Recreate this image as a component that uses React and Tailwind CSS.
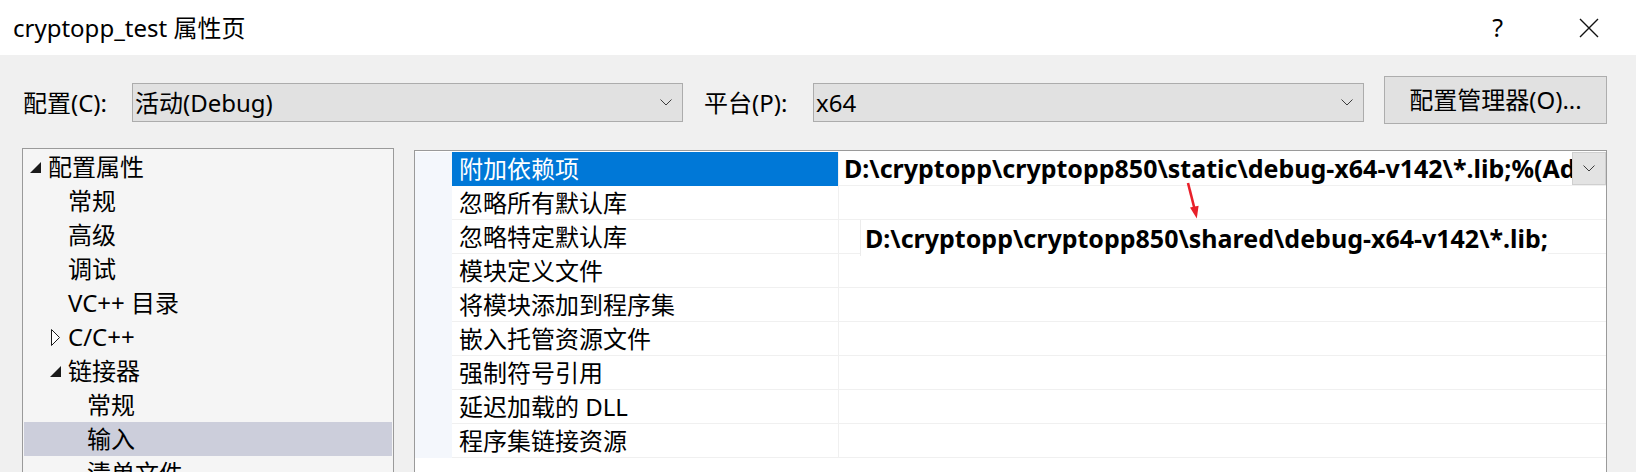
import React from 'react'

const treeItems = [
  { label: '配置属性', pad: 25, arrow: 'open' },
  { label: '常规', pad: 45 },
  { label: '高级', pad: 45 },
  { label: '调试', pad: 45 },
  { label: 'VC++ 目录', pad: 45 },
  { label: 'C/C++', pad: 45, arrow: 'closed' },
  { label: '链接器', pad: 45, arrow: 'open' },
  { label: '常规', pad: 64 },
  { label: '输入', pad: 64, selected: true },
  { label: '清单文件', pad: 64 },
]

const gridRows = [
  '附加依赖项',
  '忽略所有默认库',
  '忽略特定默认库',
  '模块定义文件',
  '将模块添加到程序集',
  '嵌入托管资源文件',
  '强制符号引用',
  '延迟加载的 DLL',
  '程序集链接资源',
]

const Chevron = () => (
  <svg width="12" height="7" viewBox="0 0 12 7" className="shrink-0">
    <path d="M0.5 0.5 L6 6 L11.5 0.5" fill="none" stroke="#3c3c3c" strokeWidth="1" />
  </svg>
)

const TreeArrow = ({ type }) => {
  if (type === 'open') {
    return (
      <svg width="11" height="11" viewBox="0 0 11 11">
        <polygon points="11,0 11,11 0,11" fill="#1a1a1a" />
      </svg>
    )
  }
  return (
    <svg width="10" height="17" viewBox="0 0 10 17">
      <polygon points="0.5,0.5 8.5,8.5 0.5,16.5" fill="#ffffff" stroke="#1a1a1a" strokeWidth="1" />
    </svg>
  )
}

const Combo = ({ value }) => (
  <div className="mt-[5px] w-[551px] h-[39px] border border-[#acacac] bg-[#e1e1e1] flex items-center pl-[2px] pr-[10px]">
    <span className="flex-1 text-[24px] leading-none text-black">{value}</span>
    <Chevron />
  </div>
)

export default function App() {
  return (
    <div className="relative w-[1636px] h-[472px] overflow-hidden bg-[#f0f0f0] font-['Noto_Sans','Noto_Sans_CJK_SC',sans-serif] text-black">
      {/* title bar */}
      <div className="h-[55px] bg-white flex items-center pl-[13px]">
        <span className="flex-1 text-[24px] leading-none">cryptopp_test 属性页</span>
        <span className="text-[25px] leading-none mr-[76px]">?</span>
        <svg width="20" height="20" viewBox="0 0 20 20" className="mr-[37px]">
          <path d="M1 1 L19 19 M19 1 L1 19" stroke="#111" strokeWidth="1.4" />
        </svg>
      </div>

      {/* config row */}
      <div className="mt-[21px] h-[48px] flex items-center">
        <div className="ml-[23px] w-[109px] mt-[5px] text-[24px] leading-none">配置(C):</div>
        <Combo value="活动(Debug)" />
        <div className="ml-[21px] w-[109px] mt-[5px] text-[24px] leading-none">平台(P):</div>
        <Combo value="x64" />
        <button className="ml-[20px] w-[223px] h-[48px] border border-[#adadad] bg-[#e1e1e1] text-[24px] leading-none text-black">
          配置管理器(O)...
        </button>
      </div>

      {/* panels */}
      <div className="mt-[24px] flex items-start">
        <div className="ml-[22px] w-[372px] h-[400px] border border-[#9a9a9a] bg-[#f5f5f5] pt-[1px]">
          {treeItems.map((item, i) => (
            <div
              key={i}
              className={`h-[34px] mx-[1px] flex items-center ${item.selected ? 'bg-[#cccedb]' : ''}`}
            >
              <div className="h-full flex items-center justify-end pr-[7px]" style={{ width: item.pad - 1 }}>
                {item.arrow && <TreeArrow type={item.arrow} />}
              </div>
              <span className="text-[24px] leading-none whitespace-nowrap">{item.label}</span>
            </div>
          ))}
        </div>

        <div className="ml-[20px] mt-[2px] w-[1193px] h-[400px] border border-[#9a9a9a] bg-white pt-[1px]">
          {gridRows.map((name, i) => (
            <div key={i} className="h-[34px] flex">
              <div className="w-[37px] bg-[#f4f7fc]" />
              <div
                className={`w-[387px] pl-[7px] flex items-center border-r border-[#f0f0f0] ${
                  i === 0 ? 'bg-[#0078d7] text-white' : 'border-b'
                }`}
              >
                <span className="text-[24px] leading-none whitespace-nowrap">{name}</span>
              </div>
              {i === 0 && (
                <div className="flex-1 flex border-b border-[#f0f0f0] overflow-hidden">
                  <div className="flex-1 pl-[5px] flex items-center overflow-hidden">
                    <span className="text-[25px] leading-none font-bold whitespace-nowrap">
                      D:\cryptopp\cryptopp850\static\debug-x64-v142\*.lib;%(AdditionalDependencies)
                    </span>
                  </div>
                  <div className="w-[34px] h-[33px] bg-[#e3e3e3] border border-[#cfcfcf] flex items-center justify-center">
                    <Chevron />
                  </div>
                </div>
              )}
              {i === 2 && (
                <div className="flex-1 flex">
                  <div className="w-[21px] border-b border-[#f0f0f0]" />
                  <div className="w-[688px] h-[36px] bg-white border-l border-[#ececec] pl-[4px] flex items-center z-10">
                    <span className="text-[25px] leading-none font-bold whitespace-nowrap">
                      D:\cryptopp\cryptopp850\shared\debug-x64-v142\*.lib;
                    </span>
                  </div>
                  <div className="flex-1 border-b border-[#f0f0f0]" />
                </div>
              )}
              {i !== 0 && i !== 2 && <div className="flex-1 border-b border-[#f0f0f0]" />}
            </div>
          ))}
        </div>
      </div>

      {/* red annotation arrow */}
      <svg width="24" height="42" viewBox="0 0 24 42" className="absolute left-[1184px] top-[180px]">
        <path d="M4 3 L10.6 29" stroke="#e8202a" strokeWidth="2.6" />
        <polygon points="12.8,38.5 6,27.6 14.6,25.8" fill="#e8202a" />
      </svg>
    </div>
  )
}
